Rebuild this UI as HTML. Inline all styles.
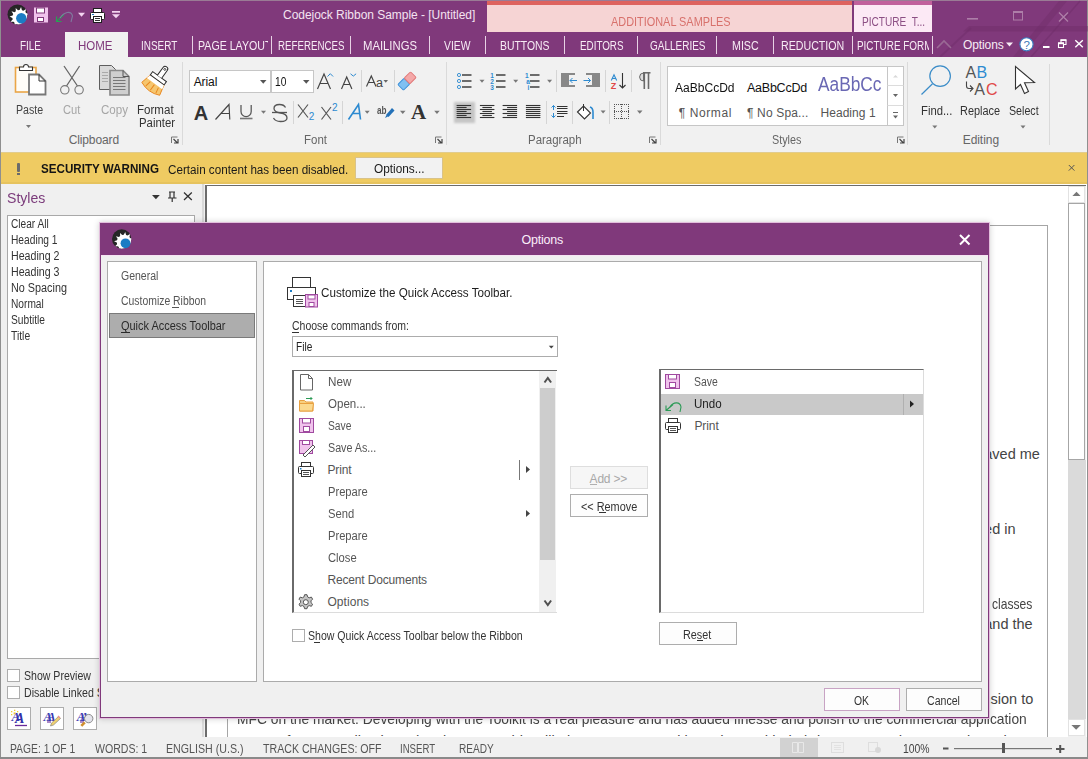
<!DOCTYPE html>
<html><head><meta charset="utf-8">
<style>
*{margin:0;padding:0;box-sizing:border-box}
html,body{width:1088px;height:759px;overflow:hidden;background:#fff;font-family:"Liberation Sans",sans-serif;position:relative}
.a{position:absolute}
.t{position:absolute;white-space:nowrap;line-height:1}
svg{position:absolute;overflow:visible}
</style></head><body>
<div class="a" style="left:0;top:0;width:1088px;height:57px;background:#80397b"></div>
<div class="a" style="left:0;top:0;width:1088px;height:1px;background:#9a7b95"></div>
<div class="a" style="left:0;top:0;width:1px;height:759px;background:#8f8f8f"></div>
<div class="a" style="left:1087px;top:0;width:1px;height:759px;background:#8f8f8f"></div>
<svg style="left:0;top:0" width="1088" height="57">
  <polygon points="963,31.5 969,26 1088,26 1088,31.5" fill="#6e2c68" opacity="0.45"/>
  <line x1="940" y1="57" x2="971" y2="28" stroke="#6e2c68" stroke-width="2" opacity="0.4"/>
  <polygon points="1013,57 1021,57 1067,1 1059,1" fill="#6e2c68" opacity="0.4"/>
  <line x1="1031" y1="57" x2="1080" y2="1" stroke="#6e2c68" stroke-width="1.6" opacity="0.45"/>
</svg>
<svg style="left:0;top:0" width="130" height="32">
  <defs><clipPath id="mlc"><circle cx="17.5" cy="14.5" r="10"/></clipPath></defs>
  <circle cx="17.5" cy="14.5" r="10" fill="#262626"/>
  <g clip-path="url(#mlc)"><path d="M27.59 17.07 L30.45 18.55 L27.35 19.43 L26.79 20.92 L28.52 23.63 L25.40 22.85 L24.17 23.85 L24.32 27.07 L22.00 24.83 L20.43 25.09 L18.95 27.95 L18.07 24.85 L16.58 24.29 L13.87 26.02 L14.65 22.90 L13.65 21.67 L10.43 21.82 L12.67 19.50 L12.41 17.93 L9.55 16.45 L12.65 15.57 L13.21 14.08 L11.48 11.37 L14.60 12.15 L15.83 11.15 L15.68 7.93 L18.00 10.17 L19.57 9.91 L21.05 7.05 L21.93 10.15 L23.42 10.71 L26.13 8.98 L25.35 12.10 L26.35 13.33 L29.57 13.18 L27.33 15.50Z" fill="#fff"/></g>
  <circle cx="21.3" cy="18.2" r="5.2" fill="#1b7cc4"/>
  <rect x="34" y="7.5" width="14" height="15" fill="#f0c3ec"/>
  <rect x="36.5" y="8" width="8" height="5" fill="#fff" stroke="#80397b" stroke-width="1"/>
  <rect x="37.5" y="17.5" width="6" height="4" fill="#fff" stroke="#80397b" stroke-width="1"/>
  <path d="M56.5 21.5 L64 14.5" stroke="#2a9a55" stroke-width="1.2" fill="none"/>
  <path d="M56.5 16.5 V21.5 H61.5" stroke="#2aa055" stroke-width="1.2" fill="none"/>
  <path d="M60 18 C64 12 71 10 72.5 16 L71 22" stroke="#7f8aa8" stroke-width="1.1" fill="none" opacity=".8"/>
  <path d="M78 12.8 h7 l-3.5 4z" fill="#f4d4f0"/>
  <rect x="93.5" y="8.5" width="8" height="4" fill="#fff" stroke="#1e1e1e" stroke-width="1"/>
  <rect x="90.5" y="12.5" width="14" height="7" rx="1" fill="#fff" stroke="#1e1e1e" stroke-width="1"/>
  <rect x="93.5" y="16.5" width="8" height="6" fill="#fff" stroke="#1e1e1e" stroke-width="1"/>
  <line x1="95" y1="18.5" x2="100" y2="18.5" stroke="#333"/>
  <line x1="95" y1="20.5" x2="100" y2="20.5" stroke="#333"/>
  <rect x="92" y="14" width="2" height="1" fill="#1b7cc4"/>
  <rect x="112" y="11" width="8" height="1.7" fill="#f4d4f0"/>
  <path d="M112 14.2 h8 l-4 4z" fill="#f4d4f0"/>
</svg>
<svg style="left:0;top:0" width="1088" height="32">
  <rect x="967" y="18" width="11" height="1.6" fill="#ad7ea8"/>
  <rect x="1013.5" y="11.5" width="9" height="8.5" fill="none" stroke="#ad7ea8" stroke-width="1"/>
  <rect x="1013" y="11" width="10" height="2" fill="#ad7ea8"/>
  <path d="M1059 12.5 L1068 21.5 M1068 12.5 L1059 21.5" stroke="#ad7ea8" stroke-width="1.3"/>
</svg>
<div class="t" style="left:283.00px;top:8.54px;font-size:12px;color:#f4e3f1;letter-spacing:-0.032px">Codejock Ribbon Sample - [Untitled]</div>
<div class="a" style="left:487px;top:1px;width:365px;height:31px;background:#f6d4d4"></div>
<div class="a" style="left:487px;top:1px;width:365px;height:4px;background:#de625e"></div>
<div class="t" style="left:611.00px;top:15.54px;font-size:12px;color:#d8716c;transform:scaleX(0.9089);transform-origin:0 0">ADDITIONAL SAMPLES</div>
<div class="a" style="left:854px;top:1px;width:78px;height:31px;background:#fce9f5"></div>
<div class="a" style="left:854px;top:1px;width:78px;height:4px;background:#c1609c"></div>
<div class="t" style="left:862.00px;top:15.54px;font-size:12px;color:#8c4f84;transform:scaleX(0.8399);transform-origin:0 0">PICTURE&nbsp; T...</div>
<div class="a" style="left:65px;top:32px;width:63px;height:26px;background:#f1f1f1"></div>
<div class="t" style="left:19.50px;top:39.54px;font-size:12px;color:#f7ecf5;transform:scaleX(0.8288);transform-origin:0 0">FILE</div>
<div class="t" style="left:78.00px;top:39.54px;font-size:12px;color:#80397b;transform:scaleX(0.9584);transform-origin:0 0">HOME</div>
<div class="t" style="left:141.17px;top:39.54px;font-size:12px;color:#f7ecf5;transform:scaleX(0.8284);transform-origin:0 0">INSERT</div>
<div class="t" style="left:197.50px;top:39.54px;font-size:12px;color:#f7ecf5;transform:scaleX(0.8854);transform-origin:0 0">PAGE LAYOUT</div>
<div class="t" style="left:278.00px;top:39.54px;font-size:12px;color:#f7ecf5;transform:scaleX(0.8109);transform-origin:0 0">REFERENCES</div>
<div class="t" style="left:363.00px;top:39.54px;font-size:12px;color:#f7ecf5;transform:scaleX(0.9417);transform-origin:0 0">MAILINGS</div>
<div class="t" style="left:444.00px;top:39.54px;font-size:12px;color:#f7ecf5;transform:scaleX(0.8615);transform-origin:0 0">VIEW</div>
<div class="t" style="left:500.00px;top:39.54px;font-size:12px;color:#f7ecf5;transform:scaleX(0.8667);transform-origin:0 0">BUTTONS</div>
<div class="t" style="left:579.50px;top:39.54px;font-size:12px;color:#f7ecf5;transform:scaleX(0.8189);transform-origin:0 0">EDITORS</div>
<div class="t" style="left:649.50px;top:39.54px;font-size:12px;color:#f7ecf5;transform:scaleX(0.8322);transform-origin:0 0">GALLERIES</div>
<div class="t" style="left:731.50px;top:39.54px;font-size:12px;color:#f7ecf5;transform:scaleX(0.8901);transform-origin:0 0">MISC</div>
<div class="t" style="left:781.30px;top:39.54px;font-size:12px;color:#f7ecf5;transform:scaleX(0.8873);transform-origin:0 0">REDUCTION</div>
<div class="a" style="left:0;top:0;width:929px;height:57px;overflow:hidden"><div class="t" style="left:857.00px;top:39.54px;font-size:12px;color:#f7ecf5;transform:scaleX(0.8267);transform-origin:0 0">PICTURE FORMAT</div></div>
<div class="a" style="left:265px;top:43px;width:6px;height:10px;background:#80397b"></div>
<div class="a" style="left:268px;top:36px;width:3px;height:18px;background:#80397b"></div>
<div class="a" style="left:192px;top:36px;width:1px;height:18px;background:#e8d2e5"></div>
<div class="a" style="left:271px;top:36px;width:1px;height:18px;background:#e8d2e5"></div>
<div class="a" style="left:350px;top:36px;width:1px;height:18px;background:#e8d2e5"></div>
<div class="a" style="left:429px;top:36px;width:1px;height:18px;background:#e8d2e5"></div>
<div class="a" style="left:485px;top:36px;width:1px;height:18px;background:#e8d2e5"></div>
<div class="a" style="left:564px;top:36px;width:1px;height:18px;background:#e8d2e5"></div>
<div class="a" style="left:637px;top:36px;width:1px;height:18px;background:#e8d2e5"></div>
<div class="a" style="left:716px;top:36px;width:1px;height:18px;background:#e8d2e5"></div>
<div class="a" style="left:773px;top:36px;width:1px;height:18px;background:#e8d2e5"></div>
<div class="a" style="left:852px;top:36px;width:1px;height:18px;background:#e8d2e5"></div>
<div class="a" style="left:932px;top:36px;width:1px;height:18px;background:#e8d2e5"></div>
<svg style="left:0;top:0" width="1088" height="57">
  <path d="M937 48 L944 41 L951 48" stroke="#9a6a95" stroke-width="1.6" fill="none"/>
  <path d="M1006 42.5 h7 l-3.5 4z" fill="#f7ecf5"/>
  <circle cx="1026.5" cy="44.3" r="6.6" fill="#fff" stroke="#3a7cc0" stroke-width="1.1"/>
  <text x="1026.6" y="48.6" font-family="Liberation Sans" font-size="11.5" fill="#3a78b8" text-anchor="middle">?</text>
  <rect x="1043" y="46" width="6.5" height="2" fill="#fff"/>
  <path d="M1061 43.5 v-3.5 h5 v4.5 h-2" stroke="#fff" stroke-width="1.1" fill="none"/><rect x="1060.5" y="39.3" width="5.8" height="1.6" fill="#fff"/>
  <rect x="1058.5" y="43" width="5" height="4.5" fill="none" stroke="#fff" stroke-width="1.1"/><rect x="1058" y="42.5" width="6" height="1.7" fill="#fff"/>
  <path d="M1075.3 40.3 L1082.8 47.3 M1082.8 40.3 L1075.3 47.3" stroke="#fff" stroke-width="1.4"/>
</svg>
<div class="t" style="left:963.00px;top:38.54px;font-size:12px;color:#f7ecf5;letter-spacing:-0.109px">Options</div>
<div class="a" style="left:1px;top:57px;width:1086px;height:95px;background:#f1f1f1"></div>
<div class="a" style="left:182px;top:62px;width:1px;height:83px;background:#dadada"></div>
<div class="a" style="left:446px;top:62px;width:1px;height:83px;background:#dadada"></div>
<div class="a" style="left:660px;top:62px;width:1px;height:83px;background:#dadada"></div>
<div class="a" style="left:907px;top:62px;width:1px;height:83px;background:#dadada"></div>
<div class="a" style="left:1049px;top:64px;width:1px;height:81px;background:#dadada"></div>
<div class="a" style="left:454px;top:102px;width:21px;height:21px;background:#c6c6c6;filter:blur(1px)"></div>
<svg style="left:0;top:0" width="1088" height="160"><path d="M171.5 143.0 v-6 h6" stroke="#777" stroke-width="1" fill="none"/><path d="M173.5 139.0 l4 4 M174 143.0 h4 v-4" stroke="#444" stroke-width="1.2" fill="none"/><path d="M435.5 143.0 v-6 h6" stroke="#777" stroke-width="1" fill="none"/><path d="M437.5 139.0 l4 4 M438 143.0 h4 v-4" stroke="#444" stroke-width="1.2" fill="none"/><path d="M649.5 143.0 v-6 h6" stroke="#777" stroke-width="1" fill="none"/><path d="M651.5 139.0 l4 4 M652 143.0 h4 v-4" stroke="#444" stroke-width="1.2" fill="none"/><path d="M897.5 143.0 v-6 h6" stroke="#777" stroke-width="1" fill="none"/><path d="M899.5 139.0 l4 4 M900 143.0 h4 v-4" stroke="#444" stroke-width="1.2" fill="none"/><rect x="15.5" y="67.5" width="20.5" height="24.5" fill="#fffdf8" stroke="#eaa647" stroke-width="1.6"/><path d="M19.5 70.5 h13 v-3.5 h-4 a2.5 2.5 0 0 0 -5 0 h-4z" fill="#fff" stroke="#333" stroke-width="1.1"/><path d="M29 74.5 h10 l6.5 6.5 v13.5 h-16.5z" fill="#fff" stroke="#777" stroke-width="1.8"/><path d="M39 74.5 v6.5 h6.5" fill="none" stroke="#333" stroke-width="1"/><path d="M26 125 h5 l-2.5 3.0z" fill="#777"/><path d="M64 66 L77.5 86 M79.6 66 L66.5 86" stroke="#666" stroke-width="1.3" fill="none"/><circle cx="64.8" cy="89.8" r="4.2" fill="none" stroke="#777" stroke-width="1.1"/><circle cx="79.1" cy="89.8" r="4.2" fill="none" stroke="#777" stroke-width="1.1"/><path d="M99.5 65.5 h12 l4 4 v20 h-16z" fill="#d9d9d9" stroke="#5e5e5e" stroke-width="1"/><path d="M110 70.5 h13 l6 6 v18.5 h-19z" fill="#cfcfcf" stroke="#8a8a8a" stroke-width="1.7"/><path d="M123 70.5 v6 h6" fill="none" stroke="#555" stroke-width="1"/><line x1="113" y1="77.5" x2="125.5" y2="77.5" stroke="#777" stroke-width="1"/><line x1="113" y1="80.5" x2="125.5" y2="80.5" stroke="#777" stroke-width="1"/><line x1="113" y1="83.5" x2="125.5" y2="83.5" stroke="#777" stroke-width="1"/><line x1="113" y1="86.5" x2="125.5" y2="86.5" stroke="#777" stroke-width="1"/><line x1="113" y1="89.5" x2="125.5" y2="89.5" stroke="#777" stroke-width="1"/><line x1="102" y1="72.5" x2="108" y2="72.5" stroke="#aaa" stroke-width="1"/><line x1="102" y1="75.5" x2="108" y2="75.5" stroke="#aaa" stroke-width="1"/><line x1="102" y1="78.5" x2="108" y2="78.5" stroke="#aaa" stroke-width="1"/><line x1="102" y1="81.5" x2="108" y2="81.5" stroke="#aaa" stroke-width="1"/><g transform="translate(157.5,79.5) rotate(36)">
 <path d="M-8.5 0.5 h17 l2.5 11 q-11 5 -22 0z" fill="#f6c66e" stroke="#e8861e" stroke-width="0.9"/>
 <path d="M-8.5 0.5 h17 l1 4.5 h-19z" fill="#fff"/>
 <path d="M-4.5 6 l-1.2 6 M0.5 6 l0 7 M5.5 6 l1.2 6" stroke="#e8861e" stroke-width="1"/>
 <rect x="-8.5" y="-3.5" width="17" height="4" fill="#fff" stroke="#2a2a2a" stroke-width="1"/>
 <path d="M-2.6 -3.5 v-9.5 a2.6 2.6 0 0 1 5.2 0 v9.5" fill="#fff" stroke="#2a2a2a" stroke-width="1"/>
 <circle cx="0" cy="-12.5" r="1" fill="none" stroke="#2a2a2a" stroke-width="0.8"/>
</g><rect x="189.5" y="70.5" width="81" height="22" fill="#fff" stroke="#c6c6c6"/><rect x="271.5" y="70.5" width="42" height="22" fill="#fff" stroke="#c6c6c6"/><path d="M260 80 h6.5 l-3.25 3.75z" fill="#555"/><path d="M303 80 h6.5 l-3.25 3.75z" fill="#555"/><line x1="361.5" y1="70" x2="361.5" y2="92" stroke="#d5d5d5"/><line x1="394.5" y1="70" x2="394.5" y2="92" stroke="#d5d5d5"/><line x1="293.5" y1="101" x2="293.5" y2="124" stroke="#d5d5d5"/><line x1="342.5" y1="101" x2="342.5" y2="124" stroke="#d5d5d5"/><path d="M327.5 76.5 l2.8 -2.8 l2.8 2.8" stroke="#2d8ad0" stroke-width="1" fill="none"/><path d="M350.5 73.8 l2.8 2.3 l2.8 -2.3" stroke="#2d8ad0" stroke-width="1" fill="none"/><path d="M383.5 80 h4.5 l-2.25 2.75z" fill="#666"/><g transform="translate(407,81) rotate(-45)">
 <rect x="-9" y="-4" width="9" height="8" rx="1" fill="#80c0f2" stroke="#3a8fd8" stroke-width="1"/>
 <rect x="0" y="-4" width="9" height="8" rx="1" fill="#f4a8a8" stroke="#e07878" stroke-width="1"/>
</g><line x1="240" y1="118.5" x2="252.5" y2="118.5" stroke="#777" stroke-width="1.6"/><path d="M261 110.8 h5 l-2.5 3.0z" fill="#777"/><line x1="272" y1="112.5" x2="287" y2="112.5" stroke="#555" stroke-width="1.3"/><path d="M364.7 110.8 h5 l-2.5 3.0z" fill="#777"/><path d="M400 110.8 h5.5 l-2.75 3.25z" fill="#777"/><path d="M434.2 110.8 h5.5 l-2.75 3.25z" fill="#777"/><path d="M386 115 l6 -7 l2.5 2.5 l-6 6.5 z" fill="#2371b8"/><path d="M385 118 l1.5 -3 l1.5 1.5z" fill="#2371b8"/><line x1="462" y1="75" x2="471.5" y2="75" stroke="#333" stroke-width="1.4"/><line x1="462" y1="81" x2="471.5" y2="81" stroke="#333" stroke-width="1.4"/><line x1="462" y1="87" x2="471.5" y2="87" stroke="#333" stroke-width="1.4"/><line x1="496" y1="75" x2="505.5" y2="75" stroke="#333" stroke-width="1.4"/><line x1="496" y1="81" x2="505.5" y2="81" stroke="#333" stroke-width="1.4"/><line x1="496" y1="87" x2="505.5" y2="87" stroke="#333" stroke-width="1.4"/><line x1="530" y1="75" x2="539.5" y2="75" stroke="#333" stroke-width="1.4"/><line x1="530" y1="81" x2="539.5" y2="81" stroke="#333" stroke-width="1.4"/><line x1="530" y1="87" x2="539.5" y2="87" stroke="#333" stroke-width="1.4"/><circle cx="459" cy="75" r="1.6" fill="none" stroke="#2d8ad0" stroke-width="0.9"/><circle cx="459" cy="81" r="1.6" fill="none" stroke="#2d8ad0" stroke-width="0.9"/><circle cx="459" cy="87" r="1.6" fill="none" stroke="#2d8ad0" stroke-width="0.9"/><text x="490.3" y="77.6" font-family="Liberation Sans" font-size="6.5" font-weight="bold" fill="#2d8ad0">1</text><text x="490.3" y="83.6" font-family="Liberation Sans" font-size="6.5" font-weight="bold" fill="#2d8ad0">2</text><text x="490.3" y="89.6" font-family="Liberation Sans" font-size="6.5" font-weight="bold" fill="#2d8ad0">3</text><text x="525.0" y="77.6" font-family="Liberation Sans" font-size="6.5" font-weight="bold" fill="#2d8ad0">1</text><text x="526.3" y="83.6" font-family="Liberation Sans" font-size="6.5" font-weight="bold" fill="#2d8ad0">a</text><text x="527.6" y="89.6" font-family="Liberation Sans" font-size="6.5" font-weight="bold" fill="#2d8ad0">i</text><path d="M479.5 79.7 h5 l-2.5 3.0z" fill="#777"/><path d="M513.2 79.7 h5 l-2.5 3.0z" fill="#777"/><path d="M547.1 79.7 h5 l-2.5 3.0z" fill="#777"/><line x1="556.5" y1="70" x2="556.5" y2="92" stroke="#d5d5d5"/><line x1="605.5" y1="70" x2="605.5" y2="92" stroke="#d5d5d5"/><line x1="631.5" y1="70" x2="631.5" y2="92" stroke="#d5d5d5"/><path d="M561 73 h14 v2 h-6 v10 h6 v2 h-14z" fill="#888"/><path d="M577 80.5 h-7 M572.5 78 l-2.5 2.5 l2.5 2.5" stroke="#2d8ad0" stroke-width="1" fill="none"/><path d="M586 73 h14 v14 h-14 v-2 h6 v-10 h-6z" fill="#888"/><path d="M583.5 80.5 h7 M588 78 l2.5 2.5 l-2.5 2.5" stroke="#2d8ad0" stroke-width="1" fill="none"/><path d="M622.5 73 v15 M619.5 85 l3 3 l3 -3" stroke="#333" stroke-width="1.1" fill="none"/><path d="M611.3 80.5 L614 74.8 L616.7 80.5 M612.3 78.5 h3.5" stroke="#2d8ad0" stroke-width="1.1" fill="none"/><path d="M643 72.8 h7.5" stroke="#666" stroke-width="1.5"/><path d="M644.3 72.5 v16.5 M648.5 72.5 v16.5" stroke="#6a6a6a" stroke-width="1.6"/><path d="M643.6 73 a4 4 0 0 0 0 8z" fill="#ddd" stroke="#666" stroke-width="1"/><line x1="456.6" y1="105.5" x2="471.1" y2="105.5" stroke="#333" stroke-width="1.1"/><line x1="456.6" y1="107.5" x2="466.6" y2="107.5" stroke="#333" stroke-width="1.1"/><line x1="456.6" y1="109.5" x2="471.1" y2="109.5" stroke="#333" stroke-width="1.1"/><line x1="456.6" y1="111.5" x2="466.6" y2="111.5" stroke="#333" stroke-width="1.1"/><line x1="456.6" y1="113.5" x2="471.1" y2="113.5" stroke="#333" stroke-width="1.1"/><line x1="456.6" y1="115.5" x2="466.6" y2="115.5" stroke="#333" stroke-width="1.1"/><line x1="456.6" y1="117.5" x2="471.1" y2="117.5" stroke="#333" stroke-width="1.1"/><line x1="479.9" y1="105.5" x2="494.4" y2="105.5" stroke="#333" stroke-width="1.1"/><line x1="482.4" y1="107.5" x2="491.9" y2="107.5" stroke="#333" stroke-width="1.1"/><line x1="479.9" y1="109.5" x2="494.4" y2="109.5" stroke="#333" stroke-width="1.1"/><line x1="482.4" y1="111.5" x2="491.9" y2="111.5" stroke="#333" stroke-width="1.1"/><line x1="479.9" y1="113.5" x2="494.4" y2="113.5" stroke="#333" stroke-width="1.1"/><line x1="482.4" y1="115.5" x2="491.9" y2="115.5" stroke="#333" stroke-width="1.1"/><line x1="479.9" y1="117.5" x2="494.4" y2="117.5" stroke="#333" stroke-width="1.1"/><line x1="502.6" y1="105.5" x2="517.1" y2="105.5" stroke="#333" stroke-width="1.1"/><line x1="507.1" y1="107.5" x2="517.1" y2="107.5" stroke="#333" stroke-width="1.1"/><line x1="502.6" y1="109.5" x2="517.1" y2="109.5" stroke="#333" stroke-width="1.1"/><line x1="507.1" y1="111.5" x2="517.1" y2="111.5" stroke="#333" stroke-width="1.1"/><line x1="502.6" y1="113.5" x2="517.1" y2="113.5" stroke="#333" stroke-width="1.1"/><line x1="507.1" y1="115.5" x2="517.1" y2="115.5" stroke="#333" stroke-width="1.1"/><line x1="502.6" y1="117.5" x2="517.1" y2="117.5" stroke="#333" stroke-width="1.1"/><line x1="525.9" y1="105.5" x2="540.4" y2="105.5" stroke="#333" stroke-width="1.1"/><line x1="525.9" y1="107.5" x2="540.4" y2="107.5" stroke="#333" stroke-width="1.1"/><line x1="525.9" y1="109.5" x2="540.4" y2="109.5" stroke="#333" stroke-width="1.1"/><line x1="525.9" y1="111.5" x2="540.4" y2="111.5" stroke="#333" stroke-width="1.1"/><line x1="525.9" y1="113.5" x2="540.4" y2="113.5" stroke="#333" stroke-width="1.1"/><line x1="525.9" y1="115.5" x2="540.4" y2="115.5" stroke="#333" stroke-width="1.1"/><line x1="525.9" y1="117.5" x2="540.4" y2="117.5" stroke="#333" stroke-width="1.1"/><line x1="546.5" y1="101" x2="546.5" y2="124" stroke="#d5d5d5"/><line x1="572.5" y1="101" x2="572.5" y2="124" stroke="#d5d5d5"/><line x1="609.5" y1="101" x2="609.5" y2="124" stroke="#d5d5d5"/><line x1="557" y1="106.5" x2="567.5" y2="106.5" stroke="#333" stroke-width="1"/><line x1="557" y1="108.5" x2="567.5" y2="108.5" stroke="#333" stroke-width="1"/><line x1="557" y1="111.5" x2="567.5" y2="111.5" stroke="#333" stroke-width="1"/><line x1="557" y1="113.5" x2="567.5" y2="113.5" stroke="#333" stroke-width="1"/><line x1="557" y1="116.5" x2="564" y2="116.5" stroke="#333" stroke-width="1"/><path d="M553.5 105.5 v4.5 M551.5 107.5 l2 -2 l2 2 M553.5 113 v4.5 M551.5 115.5 l2 2 l2 -2" stroke="#2d8ad0" stroke-width="1" fill="none"/><path d="M577.5 112 l6 -6 l7 7 l-6 6z" fill="#fff" stroke="#333" stroke-width="1.1"/><path d="M583.5 104 v7" stroke="#333" stroke-width="1"/><path d="M590 107 q3 1 3 5 v7" stroke="#2d8ad0" stroke-width="1.6" fill="none"/><path d="M600.6 110.5 h5 l-2.5 3.0z" fill="#777"/><rect x="614" y="104" width="1" height="1" fill="#555"/><rect x="614" y="111" width="1" height="1" fill="#555"/><rect x="614" y="118" width="1" height="1" fill="#555"/><rect x="614" y="104" width="1" height="1" fill="#555"/><rect x="621" y="104" width="1" height="1" fill="#555"/><rect x="628" y="104" width="1" height="1" fill="#555"/><rect x="616" y="104" width="1" height="1" fill="#555"/><rect x="616" y="111" width="1" height="1" fill="#555"/><rect x="616" y="118" width="1" height="1" fill="#555"/><rect x="614" y="106" width="1" height="1" fill="#555"/><rect x="621" y="106" width="1" height="1" fill="#555"/><rect x="628" y="106" width="1" height="1" fill="#555"/><rect x="618" y="104" width="1" height="1" fill="#555"/><rect x="618" y="111" width="1" height="1" fill="#555"/><rect x="618" y="118" width="1" height="1" fill="#555"/><rect x="614" y="108" width="1" height="1" fill="#555"/><rect x="621" y="108" width="1" height="1" fill="#555"/><rect x="628" y="108" width="1" height="1" fill="#555"/><rect x="620" y="104" width="1" height="1" fill="#555"/><rect x="620" y="111" width="1" height="1" fill="#555"/><rect x="620" y="118" width="1" height="1" fill="#555"/><rect x="614" y="110" width="1" height="1" fill="#555"/><rect x="621" y="110" width="1" height="1" fill="#555"/><rect x="628" y="110" width="1" height="1" fill="#555"/><rect x="622" y="104" width="1" height="1" fill="#555"/><rect x="622" y="111" width="1" height="1" fill="#555"/><rect x="622" y="118" width="1" height="1" fill="#555"/><rect x="614" y="112" width="1" height="1" fill="#555"/><rect x="621" y="112" width="1" height="1" fill="#555"/><rect x="628" y="112" width="1" height="1" fill="#555"/><rect x="624" y="104" width="1" height="1" fill="#555"/><rect x="624" y="111" width="1" height="1" fill="#555"/><rect x="624" y="118" width="1" height="1" fill="#555"/><rect x="614" y="114" width="1" height="1" fill="#555"/><rect x="621" y="114" width="1" height="1" fill="#555"/><rect x="628" y="114" width="1" height="1" fill="#555"/><rect x="626" y="104" width="1" height="1" fill="#555"/><rect x="626" y="111" width="1" height="1" fill="#555"/><rect x="626" y="118" width="1" height="1" fill="#555"/><rect x="614" y="116" width="1" height="1" fill="#555"/><rect x="621" y="116" width="1" height="1" fill="#555"/><rect x="628" y="116" width="1" height="1" fill="#555"/><rect x="628" y="104" width="1" height="1" fill="#555"/><rect x="628" y="111" width="1" height="1" fill="#555"/><rect x="628" y="118" width="1" height="1" fill="#555"/><rect x="614" y="118" width="1" height="1" fill="#555"/><rect x="621" y="118" width="1" height="1" fill="#555"/><rect x="628" y="118" width="1" height="1" fill="#555"/><path d="M637 110.5 h5.5 l-2.75 3.25z" fill="#777"/><rect x="667.5" y="66.5" width="236" height="59" fill="#fff" stroke="#c6c6c6"/><line x1="887.5" y1="66.5" x2="887.5" y2="125.5" stroke="#c6c6c6"/><line x1="887.5" y1="85.5" x2="903.5" y2="85.5" stroke="#dcdcdc"/><line x1="887.5" y1="105.5" x2="903.5" y2="105.5" stroke="#dcdcdc"/><path d="M893 77.6 h5 l-2.5 -2.6z" fill="#d8d8d8"/><path d="M893 94 h5 l-2.5 3.0z" fill="#666"/><rect x="893" y="112" width="5" height="1" fill="#666"/><path d="M893 115.5 h5 l-2.5 3.0z" fill="#666"/><circle cx="940.1" cy="76.1" r="10.3" fill="#fff" fill-opacity="0" stroke="#3a8cc8" stroke-width="1.2"/><path d="M932.5 83.7 L921.5 94.5" stroke="#3a8cc8" stroke-width="1.2"/><path d="M966.5 81.5 v4.5 q0 2.5 2.5 2.5 h3.5" fill="none" stroke="#444" stroke-width="1.1"/><path d="M970 85.5 l3 3 l-3 3" fill="none" stroke="#444" stroke-width="1.1"/><path d="M1015.5 66.5 L1015.5 89 L1020.5 84.5 L1024.5 93.5 L1028.5 91.5 L1024.5 82.8 L1034.5 82.5 Z" fill="#fff" stroke="#333" stroke-width="1.1" stroke-linejoin="miter"/><path d="M932.3 125.5 h5 l-2.5 3.0z" fill="#777"/><path d="M1020.5 125.5 h5 l-2.5 3.0z" fill="#777"/></svg>
<div class="t" style="left:16.40px;top:103.54px;font-size:12px;color:#444;transform:scaleX(0.8868);transform-origin:0 0">Paste</div>
<div class="t" style="left:62.70px;top:103.54px;font-size:12px;color:#a6a6a6;transform:scaleX(0.9307);transform-origin:0 0">Cut</div>
<div class="t" style="left:100.60px;top:103.54px;font-size:12px;color:#a6a6a6;transform:scaleX(0.9638);transform-origin:0 0">Copy</div>
<div class="t" style="left:137.40px;top:103.54px;font-size:12px;color:#333;transform:scaleX(0.9646);transform-origin:0 0">Format</div>
<div class="t" style="left:138.70px;top:116.54px;font-size:12px;color:#333;transform:scaleX(0.9467);transform-origin:0 0">Painter</div>
<div class="t" style="left:68.70px;top:133.54px;font-size:12px;color:#666;letter-spacing:-0.124px">Clipboard</div>
<div class="t" style="left:304.40px;top:133.54px;font-size:12px;color:#666;transform:scaleX(0.9563);transform-origin:0 0">Font</div>
<div class="t" style="left:528.40px;top:133.54px;font-size:12px;color:#666;transform:scaleX(0.9555);transform-origin:0 0">Paragraph</div>
<div class="t" style="left:771.50px;top:133.54px;font-size:12px;color:#666;transform:scaleX(0.8997);transform-origin:0 0">Styles</div>
<div class="t" style="left:962.70px;top:133.54px;font-size:12px;color:#666;letter-spacing:-0.053px">Editing</div>
<div class="t" style="left:193.70px;top:75.54px;font-size:12px;color:#111;letter-spacing:-0.085px">Arial</div>
<div class="t" style="left:275.40px;top:75.54px;font-size:12px;color:#111;transform:scaleX(0.8483);transform-origin:0 0">10</div>
<div class="t" style="left:193.70px;top:102.77px;font-size:20px;color:#333;font-weight:700">A</div>
<svg style="left:0;top:0" width="1088" height="160"><g fill="none" stroke="#444" stroke-width="1.15">
<path d="M317.5 89 L324 74 L330.5 89 M320 83.5 h8"/>
<path d="M341.5 89 L346.7 77 L351.9 89 M343.6 84.5 h6.2"/>
<path d="M366.5 86.5 L371.3 76 L376 86.5 M368.3 82.5 h6"/>
<path d="M215.5 119.5 L229 104.5 L229.8 119.5 M221 113.5 h8.5"/>
<path d="M241 105 v6.5 a5.1 5.1 0 0 0 10.2 0 v-6.5" stroke="#555" stroke-width="1.25"/>
<path d="M285.5 107.5 q-1.5 -3 -6 -3 q-5.5 0 -5.5 4 q0 3.5 6.5 4.5 q6.5 1 6.5 5 q0 3.5 -6.5 3.5 q-5 0 -7 -3.5" stroke="#555" stroke-width="1.3"/>
<path d="M298 104.5 L308 117.5 M308 104.5 L298 117.5" stroke="#555" stroke-width="1.2"/>
<path d="M321.5 107 L331 119.5 M331 107 L321.5 119.5" stroke="#555" stroke-width="1.2"/>
<path d="M348.5 119.5 L358.5 104.5 L360.5 119.5 M352.5 113.5 h7.5" stroke="#2d8ad0" stroke-width="1.6"/>
</g></svg>
<div class="t" style="left:376.00px;top:76.62px;font-size:12.5px;color:#444">a</div>
<div class="t" style="left:308.80px;top:111.73px;font-size:10px;color:#2d8ad0">2</div>
<div class="t" style="left:331.90px;top:103.23px;font-size:10px;color:#2d8ad0">2</div>
<div class="t" style="left:377.00px;top:105.73px;font-size:10px;color:#555;font-weight:700;transform:scaleX(0.8217);transform-origin:0 0">ab</div>
<div class="t" style="left:411.00px;top:101.92px;font-size:21px;color:#333;font-weight:700;font-family:'Liberation Serif'">A</div>
<div class="t" style="left:675.40px;top:82.12px;font-size:12.5px;color:#111;transform:scaleX(0.9631);transform-origin:0 0">AaBbCcDd</div>
<div class="t" style="left:747.00px;top:82.12px;font-size:12.5px;color:#111;letter-spacing:-0.240px">AaBbCcDd</div>
<div class="t" style="left:817.70px;top:75.19px;font-size:19.5px;color:#6a68b4;transform:scaleX(0.8874);transform-origin:0 0">AaBbCc</div>
<div class="t" style="left:678.70px;top:106.54px;font-size:12px;color:#555;letter-spacing:0.602px">¶ Normal</div>
<div class="t" style="left:747.00px;top:106.54px;font-size:12px;color:#555;letter-spacing:0.153px">¶ No Spa...</div>
<div class="t" style="left:820.50px;top:106.54px;font-size:12px;color:#555;letter-spacing:0.046px">Heading 1</div>
<div class="t" style="left:920.50px;top:104.54px;font-size:12px;color:#333;transform:scaleX(0.9391);transform-origin:0 0">Find...</div>
<div class="t" style="left:959.50px;top:104.54px;font-size:12px;color:#333;transform:scaleX(0.9109);transform-origin:0 0">Replace</div>
<div class="t" style="left:1008.70px;top:104.54px;font-size:12px;color:#333;transform:scaleX(0.8878);transform-origin:0 0">Select</div>
<div class="t" style="left:965.40px;top:64.66px;font-size:16px;color:#555">A</div>
<div class="t" style="left:976.50px;top:64.66px;font-size:16px;color:#2d8ad0">B</div>
<div class="t" style="left:974.20px;top:81.66px;font-size:16px;color:#555">A</div>
<div class="t" style="left:986.00px;top:81.66px;font-size:16px;color:#e04848">C</div>
<div class="t" style="left:610.80px;top:81.58px;font-size:9px;color:#e04848;font-weight:700">Z</div>
<div class="a" style="left:1px;top:152px;width:1086px;height:32px;background:#efcb62"></div>
<div class="a" style="left:1px;top:152px;width:1086px;height:1px;background:#e2cc8c"></div>
<div class="a" style="left:1px;top:182px;width:1086px;height:2px;background:#e6c35e"></div>
<div class="a" style="left:16.6px;top:163px;width:3.5px;height:8.5px;background:#6b6b6b;border-radius:1px"></div>
<div class="a" style="left:16.6px;top:172.5px;width:3.5px;height:2.5px;background:#6b6b6b"></div>
<div class="t" style="left:40.60px;top:163.12px;font-size:12.5px;color:#141414;font-weight:700;transform:scaleX(0.9298);transform-origin:0 0">SECURITY WARNING</div>
<div class="t" style="left:168.30px;top:164.12px;font-size:12.5px;color:#1a1a1a;transform:scaleX(0.9335);transform-origin:0 0">Certain content has been disabled.</div>
<div class="a" style="left:355px;top:157px;width:88px;height:22px;background:#f2f2f2;border:1px solid #d9c38a"></div>
<div class="t" style="left:374.30px;top:163.12px;font-size:12.5px;color:#1a1a1a;transform:scaleX(0.9467);transform-origin:0 0">Options...</div>
<svg style="left:0;top:0" width="1088" height="200"><path d="M1068.8 165 l5.6 5.6 M1074.4 165 l-5.6 5.6" stroke="#555" stroke-width="1"/></svg>
<div class="a" style="left:1px;top:184px;width:204px;height:553px;background:#f0f0f0"></div>
<div class="a" style="left:202px;top:184px;width:2px;height:553px;background:#d9d9d9"></div>
<div class="t" style="left:6.90px;top:190.08px;font-size:15.5px;color:#7b3b7b;transform:scaleX(0.9091);transform-origin:0 0">Styles</div>
<svg style="left:0;top:0" width="210" height="759">
<path d="M152 195 h7.8 l-3.9 4.2z" fill="#333"/>
<path d="M169 192 h6 M170 192 v6 M174 192 v6 M168 198 h8.5 M172.2 198 v4" stroke="#333" stroke-width="1.2" fill="none"/>
<path d="M184 192.5 l7.8 7.5 M191.8 192.5 l-7.8 7.5" stroke="#333" stroke-width="1.3"/>
</svg>
<div class="a" style="left:7px;top:215px;width:188px;height:444px;background:#fff;border:1px solid #a9a9a9"></div>
<div class="t" style="left:10.60px;top:218.04px;font-size:12px;color:#333;transform:scaleX(0.8438);transform-origin:0 0">Clear All</div>
<div class="t" style="left:10.60px;top:234.04px;font-size:12px;color:#333;transform:scaleX(0.8504);transform-origin:0 0">Heading 1</div>
<div class="t" style="left:10.60px;top:250.04px;font-size:12px;color:#333;transform:scaleX(0.8867);transform-origin:0 0">Heading 2</div>
<div class="t" style="left:10.60px;top:266.04px;font-size:12px;color:#333;transform:scaleX(0.8867);transform-origin:0 0">Heading 3</div>
<div class="t" style="left:10.60px;top:282.04px;font-size:12px;color:#333;transform:scaleX(0.9012);transform-origin:0 0">No Spacing</div>
<div class="t" style="left:10.60px;top:298.04px;font-size:12px;color:#333;transform:scaleX(0.8472);transform-origin:0 0">Normal</div>
<div class="t" style="left:10.60px;top:314.04px;font-size:12px;color:#333;transform:scaleX(0.8500);transform-origin:0 0">Subtitle</div>
<div class="t" style="left:10.60px;top:330.04px;font-size:12px;color:#333;transform:scaleX(0.8603);transform-origin:0 0">Title</div>
<div class="a" style="left:7px;top:669px;width:13px;height:13px;background:#fff;border:1px solid #adadad"></div>
<div class="a" style="left:7px;top:686px;width:13px;height:13px;background:#fff;border:1px solid #adadad"></div>
<div class="t" style="left:23.70px;top:670.04px;font-size:12px;color:#333;transform:scaleX(0.8800);transform-origin:0 0">Show Preview</div>
<div class="t" style="left:23.70px;top:687.04px;font-size:12px;color:#333;transform:scaleX(0.8867);transform-origin:0 0">Disable Linked</div>
<div class="t" style="left:96.80px;top:687.04px;font-size:12px;color:#333">Styles</div>
<div class="a" style="left:7px;top:707px;width:24px;height:23px;background:#fff;border:1px solid #adadad"></div>
<div class="a" style="left:40px;top:707px;width:24px;height:23px;background:#fff;border:1px solid #adadad"></div>
<div class="a" style="left:73px;top:707px;width:24px;height:23px;background:#fff;border:1px solid #adadad"></div>
<svg style="left:0;top:0" width="210" height="759">
<g font-family="Liberation Serif" font-style="italic" font-weight="bold">
<g fill="#f0d030"><rect x="11" y="711" width="1.3" height="1.3"/><rect x="14" y="709.7" width="1.3" height="1.3"/><rect x="17" y="711" width="1.3" height="1.3"/><rect x="11" y="714" width="1.3" height="1.3"/><rect x="13.6" y="712.4" width="2" height="2"/></g>
<text x="11.5" y="720.8" font-size="13" fill="#3838b0">A</text><text x="15" y="723.2" font-size="14" fill="#3030a8">A</text>
<line x1="15" y1="725.5" x2="27" y2="725.5" stroke="#6a2a9a" stroke-width="1.3"/>
<text x="43.5" y="720.5" font-size="13" fill="#3838b0">A</text><text x="47" y="721" font-size="13" fill="#3838b0">A</text>
<line x1="47" y1="722" x2="51" y2="722" stroke="#6a2a9a" stroke-width="1.1"/>
<path d="M50.5 726 l1 -3 l7 -6.5 l2 2 l-7 6.5z" fill="#f0d070" stroke="#777" stroke-width=".6"/><path d="M57.5 716.5 l1 -1 l2 2 l-1 1z" fill="#e89090"/>
<text x="76.8" y="720.5" font-size="13" fill="#3838b0">A</text><text x="80.3" y="721" font-size="13" fill="#3838b0">A</text>
<line x1="80" y1="722" x2="84" y2="722" stroke="#6a2a9a" stroke-width="1.1"/>
<path d="M84.8 722.3 l-3.5 3.5" stroke="#d09030" stroke-width="2.6"/>
<circle cx="88.7" cy="718.6" r="4.2" fill="#e4e4ec" stroke="#8a8a8a" stroke-width="1"/>
</g></svg>
<div class="a" style="left:205px;top:185px;width:863px;height:552px;background:#fff;border-left:2px solid #6c6c6c;border-top:1px solid #6c6c6c"></div>
<div class="a" style="left:227px;top:225px;width:821px;height:520px;border:1px solid #a6a6a6;border-bottom:none"></div>
<div class="a" style="left:0;top:0;width:1068px;height:736px;overflow:hidden">
<div class="t" style="left:984.25px;top:447.43px;font-size:14.5px;color:#444">aved me</div>
<div class="t" style="left:984.12px;top:521.93px;font-size:14.5px;color:#444">ed in</div>
<div class="t" style="left:991.50px;top:596.93px;font-size:14.5px;color:#444;transform:scaleX(0.8337);transform-origin:0 0">classes</div>
<div class="t" style="left:984.29px;top:616.93px;font-size:14.5px;color:#444">and the</div>
<div class="t" style="left:982.48px;top:691.93px;font-size:14.5px;color:#444">nsion to</div>
<div class="t" style="left:236.75px;top:712.23px;font-size:14.5px;color:#444;transform:scaleX(0.9516);transform-origin:0 0">MFC on the market. Developing with the Toolkit is a real pleasure and has added finesse and polish to the commercial application</div>
<div class="t" style="left:240.00px;top:734.43px;font-size:14.5px;color:#444;letter-spacing:0.047px">own software applications development. This will give you a competitive edge and help bring your product to market. The</div>
</div>
<div class="a" style="left:1068px;top:186px;width:18px;height:551px;background:#f0f0f0"></div>
<div class="a" style="left:1068px;top:186px;width:17px;height:17px;background:#fff;border:1px solid #e2e2e2"></div>
<div class="a" style="left:1068px;top:203px;width:17px;height:257px;background:#fff;border:1px solid #a6a6a6"></div>
<div class="a" style="left:1068px;top:460px;width:18px;height:259px;background:#dadada"></div>
<div class="a" style="left:1068px;top:719px;width:17px;height:17px;background:#fff;border:1px solid #e2e2e2"></div>
<div class="a" style="left:205px;top:185px;width:881px;height:1px;background:#6c6c6c"></div>
<svg style="left:0;top:0" width="1088" height="759"><path d="M1072.4 196 h8.2 l-4.1 -4.3z" fill="#777"/><path d="M1071.4 725 h9.5 l-4.75 4.8z" fill="#777"/></svg>
<div class="a" style="left:1px;top:737px;width:1086px;height:21px;background:#f0f0f0"></div>
<div class="a" style="left:0;top:757px;width:1088px;height:2px;background:#8a8a8a"></div>
<div class="t" style="left:9.50px;top:743.04px;font-size:12px;color:#555;transform:scaleX(0.8604);transform-origin:0 0">PAGE: 1 OF 1</div>
<div class="t" style="left:95.00px;top:743.04px;font-size:12px;color:#555;transform:scaleX(0.8799);transform-origin:0 0">WORDS: 1</div>
<div class="t" style="left:166.30px;top:743.04px;font-size:12px;color:#555;transform:scaleX(0.8872);transform-origin:0 0">ENGLISH (U.S.)</div>
<div class="t" style="left:263.20px;top:743.04px;font-size:12px;color:#555;transform:scaleX(0.8850);transform-origin:0 0">TRACK CHANGES: OFF</div>
<div class="t" style="left:400.00px;top:743.04px;font-size:12px;color:#555;transform:scaleX(0.8008);transform-origin:0 0">INSERT</div>
<div class="t" style="left:458.70px;top:743.04px;font-size:12px;color:#555;transform:scaleX(0.8418);transform-origin:0 0">READY</div>
<div class="t" style="left:902.80px;top:743.04px;font-size:12px;color:#444;transform:scaleX(0.8671);transform-origin:0 0">100%</div>
<div class="a" style="left:780px;top:738px;width:38px;height:19px;background:#d2d2d2"></div>
<svg style="left:0;top:0" width="1088" height="759">
<path d="M792.5 742.5 h5 v10 h-5z M798.5 742.5 h5 v10 h-5z" fill="none" stroke="#e8e8e8" stroke-width="1"/>
<rect x="831.5" y="742.5" width="12" height="10" fill="none" stroke="#dedede"/>
<path d="M834 745.5 h7 M834 747.5 h7 M834 749.5 h7" stroke="#e2e2e2"/>
<rect x="868.5" y="742.5" width="9" height="9" fill="none" stroke="#dedede"/><circle cx="878" cy="750" r="3" fill="#d8d8d8"/>
<rect x="943" y="747.5" width="5.5" height="2" fill="#555"/>
<rect x="954" y="748" width="98" height="1.2" fill="#777"/>
<rect x="1002" y="743" width="3" height="10" fill="#555"/>
<path d="M1056 749 h8.5 M1060.2 745 v8" stroke="#555" stroke-width="2"/>
</svg>
<div class="a" style="left:100px;top:223px;width:889px;height:495px;box-shadow:0 0 6px 1px rgba(0,0,0,0.18)"></div>
<div class="a" style="left:99px;top:222px;width:891px;height:497px;border:1px solid #e2bedc"></div>
<div class="a" style="left:100px;top:223px;width:889px;height:495px;background:#f0f0f0;border:1px solid #80397b"></div>
<div class="a" style="left:100px;top:223px;width:889px;height:32px;background:#80397b"></div>
<div class="a" style="left:101px;top:255px;width:887px;height:1px;background:#f6e4f3"></div>
<svg style="left:0;top:0" width="1088" height="759">
 <defs><clipPath id="dlc"><circle cx="121.7" cy="239" r="9.7"/></clipPath></defs>
 <circle cx="121.7" cy="239" r="9.7" fill="#262626"/>
 <g clip-path="url(#dlc)"><path d="M131.59 241.78 L134.35 243.22 L131.36 244.08 L130.81 245.53 L132.48 248.16 L129.46 247.41 L128.26 248.39 L128.39 251.50 L126.15 249.34 L124.62 249.59 L123.18 252.35 L122.32 249.36 L120.87 248.81 L118.24 250.48 L118.99 247.46 L118.01 246.26 L114.90 246.39 L117.06 244.15 L116.81 242.62 L114.05 241.18 L117.04 240.32 L117.59 238.87 L115.92 236.24 L118.94 236.99 L120.14 236.01 L120.01 232.90 L122.25 235.06 L123.78 234.81 L125.22 232.05 L126.08 235.04 L127.53 235.59 L130.16 233.92 L129.41 236.94 L130.39 238.14 L133.50 238.01 L131.34 240.25Z" fill="#fff"/></g>
 <circle cx="125.5" cy="243.3" r="4.9" fill="#1b7cc4"/>
 <path d="M960 235 l9.5 9.5 M969.5 235 l-9.5 9.5" stroke="#fff" stroke-width="2"/>
</svg>
<div class="t" style="left:521.60px;top:233.62px;font-size:12.5px;color:#fbeefa;letter-spacing:-0.238px">Options</div>
<div class="a" style="left:107px;top:261px;width:150px;height:421px;background:#fff;border:1px solid #ababab"></div>
<div class="t" style="left:120.60px;top:270.04px;font-size:12px;color:#555;transform:scaleX(0.8757);transform-origin:0 0">General</div>
<div class="t" style="left:120.60px;top:295.04px;font-size:12px;color:#555;transform:scaleX(0.8678);transform-origin:0 0">Customize Ribbon</div>
<div class="a" style="left:109px;top:313px;width:146px;height:25px;background:#adadad;border:1px solid #7a7a7a"></div>
<div class="t" style="left:120.60px;top:320.04px;font-size:12px;color:#2a2a2a;transform:scaleX(0.9126);transform-origin:0 0">Quick Access Toolbar</div>
<div class="a" style="left:172px;top:306.5px;width:7px;height:1px;background:#555"></div>
<div class="a" style="left:121px;top:331.5px;width:9px;height:1px;background:#2a2a2a"></div>
<div class="a" style="left:263px;top:261px;width:719px;height:421px;background:#fff;border:1px solid #ababab"></div>
<svg style="left:0;top:0" width="1088" height="759">
 <rect x="292.5" y="277.5" width="18" height="10" fill="#fff" stroke="#333" stroke-width="1"/>
 <rect x="287.5" y="287.5" width="28" height="12" fill="#fff" stroke="#333" stroke-width="1"/>
 <rect x="290" y="290" width="2" height="2" fill="#1b7cc4"/>
 <rect x="293.5" y="295.5" width="12" height="11" fill="#fff" stroke="#333" stroke-width="1"/>
 <path d="M296 299.5 h7 M296 301.5 h7 M296 303.5 h7" stroke="#555" stroke-width="1"/>
 <rect x="305.5" y="294.5" width="12" height="12.5" fill="#f0c3ec" stroke="#a04aa0" stroke-width="1"/>
 <rect x="308" y="295" width="7" height="4" fill="#fff" stroke="#a04aa0" stroke-width="1"/>
 <rect x="309" y="302.5" width="5" height="4" fill="#fff" stroke="#a04aa0" stroke-width="1"/>
</svg>
<div class="t" style="left:321.40px;top:287.12px;font-size:12.5px;color:#1e1e1e;transform:scaleX(0.9322);transform-origin:0 0">Customize the Quick Access Toolbar.</div>
<div class="t" style="left:292.00px;top:320.04px;font-size:12px;color:#333;transform:scaleX(0.8727);transform-origin:0 0">Choose commands from:</div>
<div class="a" style="left:292px;top:331.5px;width:7px;height:1px;background:#333"></div>
<div class="a" style="left:292px;top:336px;width:266px;height:21px;background:#fff;border:1px solid #acacac"></div>
<div class="t" style="left:295.60px;top:341.04px;font-size:12px;color:#222;transform:scaleX(0.8392);transform-origin:0 0">File</div>
<svg style="left:0;top:0" width="1088" height="759"><path d="M548.8 345.8 h5 l-2.5 2.6z" fill="#444"/></svg>
<div class="a" style="left:292px;top:369.5px;width:265px;height:243px;background:#fff;border-left:2px solid #6a6a6a;border-top:1px solid #6a6a6a;border-bottom:1px solid #dcdcdc"></div>
<div class="a" style="left:539px;top:371px;width:17px;height:241px;background:#f0f0f0"></div>
<div class="a" style="left:540px;top:388px;width:15px;height:172px;background:#cdcdcd"></div>
<svg style="left:0;top:0" width="1088" height="759"><path d="M544.5 382.5 l3.3 -4.5 l3.3 4.5" fill="none" stroke="#505050" stroke-width="2"/><path d="M544.5 600.5 l3.3 4.5 l3.3 -4.5" fill="none" stroke="#505050" stroke-width="2"/></svg>
<div class="t" style="left:327.50px;top:376.04px;font-size:12px;color:#555;transform:scaleX(0.9737);transform-origin:0 0">New</div>
<div class="t" style="left:327.50px;top:398.04px;font-size:12px;color:#555;transform:scaleX(0.9610);transform-origin:0 0">Open...</div>
<div class="t" style="left:327.50px;top:420.04px;font-size:12px;color:#555;transform:scaleX(0.8563);transform-origin:0 0">Save</div>
<div class="t" style="left:327.50px;top:442.04px;font-size:12px;color:#555;transform:scaleX(0.8941);transform-origin:0 0">Save As...</div>
<div class="t" style="left:327.50px;top:464.04px;font-size:12px;color:#555;letter-spacing:-0.135px">Print</div>
<div class="t" style="left:327.50px;top:486.04px;font-size:12px;color:#555;transform:scaleX(0.9299);transform-origin:0 0">Prepare</div>
<div class="t" style="left:327.50px;top:508.04px;font-size:12px;color:#555;transform:scaleX(0.9360);transform-origin:0 0">Send</div>
<div class="t" style="left:327.50px;top:530.04px;font-size:12px;color:#555;transform:scaleX(0.9299);transform-origin:0 0">Prepare</div>
<div class="t" style="left:327.50px;top:552.04px;font-size:12px;color:#555;transform:scaleX(0.9353);transform-origin:0 0">Close</div>
<div class="t" style="left:327.50px;top:574.04px;font-size:12px;color:#555;letter-spacing:-0.163px">Recent Documents</div>
<div class="t" style="left:327.50px;top:596.04px;font-size:12px;color:#555;letter-spacing:0.041px">Options</div>
<svg style="left:0;top:0" width="1088" height="759">
 <path d="M300.5 374.5 h8 l4 4 v11.5 h-12z M308.5 374.5 v4 h4" fill="#fff" stroke="#666" stroke-width="1"/>
 <path d="M299.5 400.5 h5 l1.5 1.5 h7 v9 h-13.5z" fill="#f7cf80" stroke="#e8a040" stroke-width="1"/>
 <path d="M299.5 403.5 h14 l-1 7.5 h-13z" fill="#fbd98f" stroke="#e8a040" stroke-width="1"/>
 <path d="M306 398.5 h6 l-1.5 -1.5 M312 398.5 l-1.5 1.5" stroke="#2a9a55" stroke-width="1" fill="none"/>
 <rect x="299.5" y="418.5" width="14" height="14" fill="#f0c3ec" stroke="#a04aa0" stroke-width="1"/>
 <rect x="302.5" y="418.5" width="8" height="4.5" fill="#fff" stroke="#a04aa0" stroke-width="1"/>
 <rect x="303.5" y="426.5" width="6" height="5" fill="#fff" stroke="#a04aa0" stroke-width="1"/>
 <rect x="299.5" y="440.5" width="13" height="13" fill="#f0c3ec" stroke="#a04aa0" stroke-width="1"/>
 <rect x="302.5" y="440.5" width="7" height="4" fill="#fff" stroke="#a04aa0" stroke-width="1"/>
 <path d="M303 455 l10 -10 l2 2 l-10 10z" fill="#fff" stroke="#555" stroke-width="1"/>
 <rect x="301.5" y="462.5" width="9" height="4" fill="#fff" stroke="#333" stroke-width="1"/>
 <rect x="298.5" y="466.5" width="15" height="7" rx="1" fill="#fff" stroke="#333" stroke-width="1"/>
 <rect x="301.5" y="470.5" width="9" height="6" fill="#fff" stroke="#333" stroke-width="1"/>
 <path d="M303 472.5 h6 M303 474.5 h6" stroke="#555" stroke-width="1"/>
 <rect x="300" y="468" width="1.5" height="1.5" fill="#1b7cc4"/>
 <line x1="519.5" y1="460" x2="519.5" y2="480" stroke="#777"/>
 <path d="M526 466 v7 l4 -3.5z" fill="#444"/>
 <path d="M526 510 v7 l4 -3.5z" fill="#444"/>
 <g transform="translate(305.8,602.2)">
  <path d="M-1.2 -7.5 h2.4 l.6 2.2 1.6 .9 2.2-.7 1.2 2.1-1.6 1.6 v1.8 l1.6 1.6-1.2 2.1-2.2-.7-1.6 .9-.6 2.2 h-2.4 l-.6-2.2-1.6-.9-2.2 .7-1.2-2.1 1.6-1.6 v-1.8 l-1.6-1.6 1.2-2.1 2.2 .7 1.6-.9z" fill="#c4c4c4" stroke="#555" stroke-width="1"/>
  <circle r="2.5" fill="#fff" stroke="#555" stroke-width="1"/>
 </g>
</svg>
<div class="a" style="left:292px;top:629px;width:13px;height:13px;background:#fff;border:1px solid #adadad"></div>
<div class="t" style="left:307.70px;top:630.04px;font-size:12px;color:#333;transform:scaleX(0.8803);transform-origin:0 0">Show Quick Access Toolbar below the Ribbon</div>
<div class="a" style="left:314px;top:641.5px;width:6px;height:1px;background:#333"></div>
<div class="a" style="left:570px;top:466px;width:78px;height:23px;background:#f6f6f6;border:1px solid #dedede"></div>
<div class="t" style="left:589.60px;top:472.54px;font-size:12px;color:#a8a8a8;letter-spacing:-0.219px">Add &gt;&gt;</div>
<div class="a" style="left:590px;top:484px;width:7px;height:1px;background:#b0b0b0"></div>
<div class="a" style="left:570px;top:494px;width:78px;height:23px;background:#fdfdfd;border:1px solid #adadad"></div>
<div class="t" style="left:580.60px;top:500.54px;font-size:12px;color:#333;transform:scaleX(0.9060);transform-origin:0 0">&lt;&lt; Remove</div>
<div class="a" style="left:599px;top:512px;width:7px;height:1px;background:#333"></div>
<div class="a" style="left:659px;top:369px;width:265px;height:244px;background:#fff;border-left:2px solid #6a6a6a;border-top:1px solid #6a6a6a;border-right:1px solid #dcdcdc;border-bottom:1px solid #dcdcdc"></div>
<div class="a" style="left:661px;top:393.5px;width:262px;height:21px;background:#c9c9c9"></div>
<div class="a" style="left:903px;top:393.5px;width:20px;height:21px;border-left:1px solid #b0b0b0"></div>
<div class="t" style="left:694.40px;top:376.04px;font-size:12px;color:#555;transform:scaleX(0.8671);transform-origin:0 0">Save</div>
<div class="t" style="left:694.40px;top:398.04px;font-size:12px;color:#222;transform:scaleX(0.9651);transform-origin:0 0">Undo</div>
<div class="t" style="left:694.40px;top:420.04px;font-size:12px;color:#555;letter-spacing:-0.085px">Print</div>
<svg style="left:0;top:0" width="1088" height="759">
 <rect x="665.5" y="374.5" width="14" height="14" fill="#f0c3ec" stroke="#a04aa0" stroke-width="1"/>
 <rect x="668.5" y="374.5" width="8" height="4.5" fill="#fff" stroke="#a04aa0" stroke-width="1"/>
 <rect x="669.5" y="382.5" width="6" height="5" fill="#fff" stroke="#a04aa0" stroke-width="1"/>
 <path d="M666 410.5 l7 -6 M666 405.5 v5 h5" stroke="#2a9a55" stroke-width="1.1" fill="none"/>
 <path d="M670 407 c3 -5 10 -6 11 0 l-1 5" stroke="#2a9a55" stroke-width="1.1" fill="none"/>
 <path d="M910 400.5 v7 l4 -3.5z" fill="#222"/>
 <rect x="668.5" y="418.5" width="9" height="4" fill="#fff" stroke="#333" stroke-width="1"/>
 <rect x="665.5" y="422.5" width="15" height="7" rx="1" fill="#fff" stroke="#333" stroke-width="1"/>
 <rect x="668.5" y="426.5" width="9" height="6" fill="#fff" stroke="#333" stroke-width="1"/>
 <path d="M670 428.5 h6 M670 430.5 h6" stroke="#555" stroke-width="1"/>
</svg>
<div class="a" style="left:659px;top:622px;width:78px;height:23px;background:#fdfdfd;border:1px solid #adadad"></div>
<div class="t" style="left:683.30px;top:628.54px;font-size:12px;color:#333;transform:scaleX(0.9027);transform-origin:0 0">Reset</div>
<div class="a" style="left:697px;top:640px;width:6px;height:1px;background:#333"></div>
<div class="a" style="left:824px;top:688px;width:76px;height:23px;background:#fdfdfd;border:1px solid #c8a3c4"></div>
<div class="t" style="left:854.20px;top:694.54px;font-size:12px;color:#333;transform:scaleX(0.8654);transform-origin:0 0">OK</div>
<div class="a" style="left:906px;top:688px;width:76px;height:23px;background:#fdfdfd;border:1px solid #adadad"></div>
<div class="t" style="left:926.70px;top:694.54px;font-size:12px;color:#333;transform:scaleX(0.8804);transform-origin:0 0">Cancel</div>
</body></html>
